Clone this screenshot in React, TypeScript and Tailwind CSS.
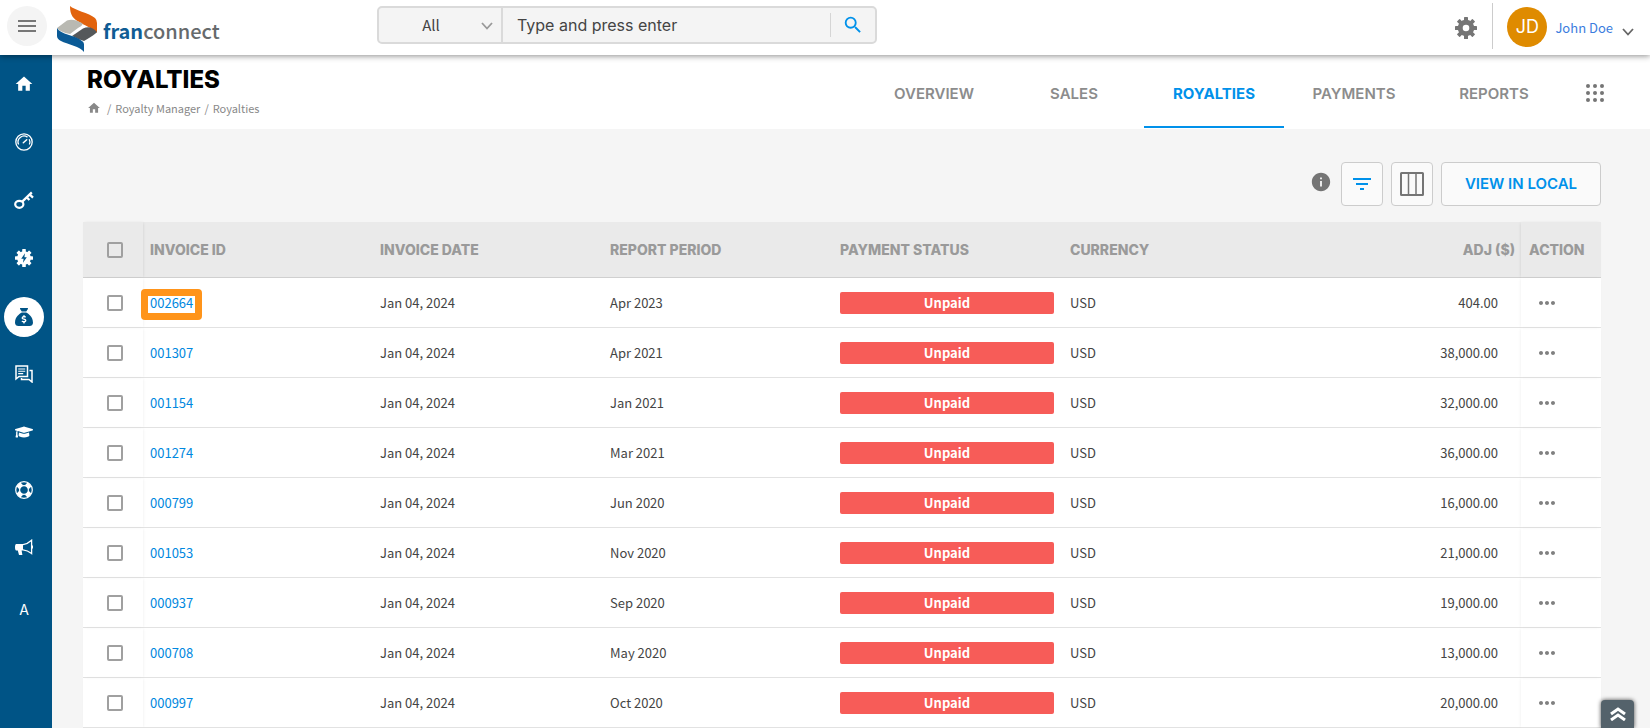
import { useState } from "react";
import type { ReactNode } from "react";
import { MdFilterList, MdHome, MdInfo, MdMenu, MdMoreHoriz, MdSearch } from "react-icons/md";
import { FaGraduationCap } from "react-icons/fa";
import { FaSackDollar } from "react-icons/fa6";

interface Invoice {
  id: string;
  date: string;
  period: string;
  status: string;
  currency: string;
  adj: string;
}

const invoices: Invoice[] = [
  { id: "002664", date: "Jan 04, 2024", period: "Apr 2023", status: "Unpaid", currency: "USD", adj: "404.00" },
  { id: "001307", date: "Jan 04, 2024", period: "Apr 2021", status: "Unpaid", currency: "USD", adj: "38,000.00" },
  { id: "001154", date: "Jan 04, 2024", period: "Jan 2021", status: "Unpaid", currency: "USD", adj: "32,000.00" },
  { id: "001274", date: "Jan 04, 2024", period: "Mar 2021", status: "Unpaid", currency: "USD", adj: "36,000.00" },
  { id: "000799", date: "Jan 04, 2024", period: "Jun 2020", status: "Unpaid", currency: "USD", adj: "16,000.00" },
  { id: "001053", date: "Jan 04, 2024", period: "Nov 2020", status: "Unpaid", currency: "USD", adj: "21,000.00" },
  { id: "000937", date: "Jan 04, 2024", period: "Sep 2020", status: "Unpaid", currency: "USD", adj: "19,000.00" },
  { id: "000708", date: "Jan 04, 2024", period: "May 2020", status: "Unpaid", currency: "USD", adj: "13,000.00" },
  { id: "000997", date: "Jan 04, 2024", period: "Oct 2020", status: "Unpaid", currency: "USD", adj: "20,000.00" },
];

const tabs = ["OVERVIEW", "SALES", "ROYALTIES", "PAYMENTS", "REPORTS"];

const teeth = [0, 45, 90, 135, 180, 225, 270, 315];

function GearIcon() {
  return (
    <svg viewBox="0 0 24 24" className="size-6" fill="currentColor">
      {teeth.map((a) => (
        <rect key={a} x="10" y="1" width="4" height="5" rx="0.6" transform={`rotate(${a} 12 12)`} />
      ))}
      <circle cx="12" cy="12" r="5.8" fill="none" stroke="currentColor" strokeWidth="5" />
    </svg>
  );
}

function GaugeIcon() {
  return (
    <svg viewBox="0 0 18 18" className="size-[18px]" fill="none" stroke="currentColor">
      <circle cx="9" cy="9" r="8.2" strokeWidth="1.3" />
      <path d="M3.6 11.5A6 6 0 0 1 12.5 4.1M14.2 6.2a6 6 0 0 1 .2 5.3" strokeWidth="1.3" />
      <path d="M8.3 9.8l3.4-3.1" strokeWidth="1.5" strokeLinecap="round" />
    </svg>
  );
}

function KeyIcon() {
  return (
    <svg viewBox="0 0 20 20" className="size-5" fill="none" stroke="currentColor">
      <ellipse cx="5.3" cy="14.3" rx="4.1" ry="3.5" strokeWidth="2.2" />
      <path d="M8 11.8L17.8 2.4M12.6 7.2l2.8 2.8M15.6 4.4l3.4 3.2" strokeWidth="2.3" />
    </svg>
  );
}

function GearBoltIcon() {
  return (
    <svg viewBox="0 0 20 20" className="size-5" fill="currentColor">
      {teeth.map((a) => (
        <rect key={a} x="8.2" y="1" width="3.6" height="5" rx="0.6" transform={`rotate(${a} 10 10)`} />
      ))}
      <circle cx="10" cy="10" r="6.8" />
      <path d="M11 5.2L7.2 10.8h2.4L9 14.8l3.8-5.6h-2.4z" fill="#005486" />
    </svg>
  );
}

function ChatIcon() {
  return (
    <svg viewBox="0 0 18 18" className="size-[18px]" fill="none" stroke="currentColor" strokeWidth="1.5">
      <path d="M1 1h11.5v10.5H4L1 14z" />
      <path d="M3.2 4h7M3.2 6.3h7M3.2 8.6h5" strokeWidth="1.1" />
      <path d="M14.5 5.5H17V17l-3-2.5H6.5v-1.6" />
    </svg>
  );
}

function LifeRingIcon() {
  return (
    <svg viewBox="0 0 18 18" className="size-[18px]" fill="none">
      <circle cx="9" cy="9" r="8.3" stroke="currentColor" strokeWidth="1.2" />
      <circle cx="9" cy="9" r="4.4" stroke="currentColor" strokeWidth="1.2" />
      <g stroke="currentColor" strokeWidth="5.4">
        {[45, 135, 225, 315].map((a) => (
          <path key={a} d="M9 .9v4.2" transform={`rotate(${a} 9 9)`} />
        ))}
      </g>
    </svg>
  );
}

function MegaphoneIcon() {
  return (
    <svg viewBox="0 0 18 18" className="size-[18px]">
      <path d="M1 5h7v6.4H6.6l.8 4.6H4l-1.2-4.6H1C.3 11 0 9.8 0 8.2S.3 5.4 1 5z" fill="currentColor" />
      <path d="M8 5.6c3.2-.4 6-2 8.6-4.4v13.4c-2.6-2.2-5.4-3.6-8.6-3.8" fill="none" stroke="currentColor" strokeWidth="1.3" />
      <path d="M17.4 6.5v3" stroke="currentColor" strokeWidth="1.2" />
    </svg>
  );
}

function ColumnsIcon() {
  return (
    <svg viewBox="0 0 24 24" className="size-6" fill="none" stroke="#757575">
      <rect x="1" y="1" width="22" height="22" rx="0.5" strokeWidth="2" />
      <path d="M8.5 1v22M16 1v22" strokeWidth="1.5" />
    </svg>
  );
}

function AppsIcon() {
  return (
    <svg viewBox="0 0 18 18" className="size-[18px]" fill="currentColor">
      {[2, 9, 16].map((y) => [2, 9, 16].map((x) => <circle key={`${x}-${y}`} cx={x} cy={y} r="2" />))}
    </svg>
  );
}

function LogoMark() {
  return (
    <svg viewBox="0 0 40 46" className="h-[46px] w-10">
      <path d="M13 0C17 4 32 7 38 12Q40 14 40 17V27C37 23 29 20 24 17C16 13 13 9 13 0Z" fill="#e2630d" />
      <path d="M0 22L10 14.500Q16 12 25 17Q27 19 21 22L13 28Q3 26 0 22Z" fill="#b9b9b2" />
      <path d="M40 26Q39 28 27 35Q20 33 15 30L26 22.500Q34 19 40 26Z" fill="#55585a" />
      <path d="M0 22Q2 26 12 29Q26 33 27 38V46C24 41 10 38 4 35Q0 33 0 30Z" fill="#0a5a96" />
    </svg>
  );
}

function Chevron() {
  return (
    <svg viewBox="0 0 12 8" className="h-2 w-3" fill="none" stroke="currentColor" strokeWidth="1.8">
      <path d="M1 1l5 5.500L11 1" />
    </svg>
  );
}

const sideItems: { label: string; icon: ReactNode; active?: boolean }[] = [
  { label: "Home", icon: <MdHome className="size-5" /> },
  { label: "Dashboard", icon: <GaugeIcon /> },
  { label: "Access", icon: <KeyIcon /> },
  { label: "Operations", icon: <GearBoltIcon /> },
  { label: "Finance", icon: <FaSackDollar className="size-[18px]" />, active: true },
  { label: "Messages", icon: <ChatIcon /> },
  { label: "Training", icon: <FaGraduationCap className="size-[18px]" /> },
  { label: "Support", icon: <LifeRingIcon /> },
  { label: "Marketing", icon: <MegaphoneIcon /> },
  { label: "Admin", icon: <span className="pt-2 font-['Inter',sans-serif] text-sm">A</span> },
];

function TopBar() {
  return (
    <header className="relative z-20 flex h-[55px] shrink-0 items-center bg-white pb-[3px] shadow-[0_1px_6px_rgba(0,0,0,0.45)]">
      <button aria-label="Menu" className="ml-[7px] flex size-10 shrink-0 items-center justify-center rounded-full bg-[#f4f4f4] text-[#777]">
        <MdMenu className="size-6" />
      </button>
      <a href="#" className="ml-2.5 flex w-[320px] shrink-0 items-center gap-1.5 pt-1.5">
        <LogoMark />
        <span className="pt-1 text-xl leading-none font-medium text-[#666a6c]">
          <span className="font-bold text-[#0f5c94]">fran</span>connect
        </span>
      </a>

      {/* search */}
      <form
        className="-mt-0.5 flex h-[38px] w-[500px] items-center rounded-[5px] border-2 border-[#dadada] bg-[#f4f4f4]"
        onSubmit={(e) => e.preventDefault()}
      >
        <div className="relative h-full w-[124px] shrink-0 border-r-2 border-[#dadada]">
          <select aria-label="Search in" className="h-full w-full appearance-none pr-[18px] text-center text-[15px] text-[#444] [text-align-last:center]">
            <option>All</option>
          </select>
          <span className="pointer-events-none absolute top-3.5 right-2 text-[#999]">
            <Chevron />
          </span>
        </div>
        <input
          type="text"
          aria-label="Search"
          placeholder="Type and press enter"
          className="h-full min-w-0 flex-1 px-3.5 font-['Inter',sans-serif] text-base outline-none placeholder:text-[#444]"
        />
        <button aria-label="Search" className="flex h-6 w-[45px] items-center justify-center border-l border-[#d5d5d5] text-[#0091ea]">
          <MdSearch className="size-[22px]" />
        </button>
      </form>

      <div className="ml-auto flex items-center">
        <button aria-label="Settings" className="mt-1 mr-3.5 text-[#757575]">
          <GearIcon />
        </button>
        <div className="mr-3.5 h-[46px] w-px bg-[#ccc]" />
        <button className="flex items-center pt-0.5">
          <span className="flex size-10 items-center justify-center rounded-full bg-[#df8b00] font-['Inter',sans-serif] text-lg text-white">
            JD
          </span>
          <span className="ml-2 pt-0.5 text-[13px] text-[#3b7dde]">John Doe</span>
          <span className="mt-2.5 mr-4 ml-[9px] text-[#666]">
            <Chevron />
          </span>
        </button>
      </div>
    </header>
  );
}

function SideBar() {
  return (
    <nav className="flex w-[52px] shrink-0 flex-col bg-[#005486] pt-px">
      {sideItems.map((item) => (
        <a key={item.label} href="#" aria-label={item.label} className="flex h-[58px] items-center pl-1">
          <span
            className={
              item.active
                ? "flex size-10 items-center justify-center rounded-full bg-white text-[#005486]"
                : "flex size-10 items-center justify-center pb-0.5 text-white"
            }
          >
            {item.icon}
          </span>
        </a>
      ))}
    </nav>
  );
}

function PageHeader({ tab, onTab }: { tab: string; onTab: (t: string) => void }) {
  return (
    <div className="flex h-[74px] shrink-0 justify-between bg-white pl-[35px]">
      <div className="pt-3">
        <h1 className="font-['Inter',sans-serif] text-2xl leading-[26px] font-extrabold text-black">ROYALTIES</h1>
        <div className="mt-[5px] flex items-center text-[11px] leading-5 text-[#888]">
          <a href="#" aria-label="Home">
            <MdHome className="size-3.5" />
          </a>
          <span className="mr-1 ml-1.5">/</span>
          <a href="#">Royalty Manager</a>
          <span className="mx-1">/</span>
          <span>Royalties</span>
        </div>
      </div>
      <div className="flex">
        {tabs.map((t) => (
          <button
            key={t}
            onClick={() => onTab(t)}
            className={
              t === tab
                ? "mb-px w-[140px] border-b-2 border-[#0091ea] pt-2 font-['Inter',sans-serif] text-[15px] font-bold text-[#0091ea]"
                : "mb-px w-[140px] border-b-2 border-transparent pt-2 font-['Inter',sans-serif] text-[15px] font-semibold text-[#8c8c8c]"
            }
          >
            {t}
          </button>
        ))}
        <button aria-label="Apps" className="mr-[46px] ml-[22px] pt-0.5 text-[#757575]">
          <AppsIcon />
        </button>
      </div>
    </div>
  );
}

function Check({ label }: { label: string }) {
  return (
    <input
      type="checkbox"
      aria-label={label}
      className="block size-4 appearance-none rounded-xs border-2 border-[#a0a0a0] checked:bg-[#0091ea]"
    />
  );
}

function InvoiceTable() {
  const th = "h-14 border-b border-[#d0d0d0] pl-[7px] text-left font-extrabold";
  const td = "h-[50px] border-b border-[#e2e2e2] pt-px pl-[7px]";

  return (
    <table className="w-full table-fixed border-separate border-spacing-0">
      <colgroup>
        <col className="w-[60px]" />
        <col className="w-[230px]" />
        <col className="w-[230px]" />
        <col className="w-[230px]" />
        <col className="w-[230px]" />
        <col />
        <col className="w-20" />
      </colgroup>
      <thead className="bg-[#eaeaea] font-['Inter',sans-serif] text-sm text-[#9a9a9a]">
        <tr>
          <th className="h-14 border-b border-[#d0d0d0] pl-6 shadow-[1px_0_3px_-1px_rgba(0,0,0,0.12)]">
            <Check label="Select all" />
          </th>
          <th className={th}>INVOICE ID</th>
          <th className={th}>INVOICE DATE</th>
          <th className={th}>REPORT PERIOD</th>
          <th className={th}>PAYMENT STATUS</th>
          <th className={th}>
            <div className="flex justify-between pr-1.5">
              <span>CURRENCY</span>
              <span>ADJ ($)</span>
            </div>
          </th>
          <th className="h-14 border-b border-[#d0d0d0] pl-2 text-left font-extrabold shadow-[-1px_0_3px_-1px_rgba(0,0,0,0.12)]">
            ACTION
          </th>
        </tr>
      </thead>
      <tbody className="bg-white text-[13px] text-[#444]">
        {invoices.map((inv, i) => (
          <tr key={inv.id}>
            <td className="h-[50px] border-b border-[#e2e2e2] pl-6 shadow-[1px_0_3px_-1px_rgba(0,0,0,0.08)]">
              <Check label={`Select invoice ${inv.id}`} />
            </td>
            <td className={td}>
              <a href="#" className="relative text-[#0088e0]">
                {inv.id}
                {i === 0 && (
                  <span className="pointer-events-none absolute -inset-x-[9px] -top-1 -bottom-2 rounded border-[7px] border-[#ff941a]" />
                )}
              </a>
            </td>
            <td className={td}>{inv.date}</td>
            <td className={td}>{inv.period}</td>
            <td className={td}>
              <div className="mr-[9px] rounded-xs bg-[#f75c58] text-center leading-[22px] font-bold text-white">
                {inv.status}
              </div>
            </td>
            <td className={td}>
              <div className="flex justify-between pr-[23px]">
                <span>{inv.currency}</span>
                <span>{inv.adj}</span>
              </div>
            </td>
            <td className="h-[50px] border-b border-[#e2e2e2] pl-3.5 shadow-[-1px_0_3px_-1px_rgba(0,0,0,0.08)]">
              <button aria-label="Actions" className="block text-[#808080]">
                <MdMoreHoriz className="size-6" />
              </button>
            </td>
          </tr>
        ))}
      </tbody>
    </table>
  );
}

export default function App() {
  const [tab, setTab] = useState("ROYALTIES");

  return (
    <div className="flex min-h-screen flex-col bg-[#f5f5f5] font-['Noto_Sans_CJK_SC',sans-serif]">
      <TopBar />
      <div className="flex flex-1">
        <SideBar />
        <main className="min-w-0 flex-1">
          <PageHeader tab={tab} onTab={setTab} />

          <div className="mr-[49px] ml-[31px] pt-[33px]">
            <div className="mb-4 flex items-center justify-end gap-2">
              <MdInfo className="mr-px mb-1 size-[22px] text-[#757575]" />
              <button
                aria-label="Filter"
                className="flex h-11 w-[42px] items-center justify-center rounded border border-[#ccc] bg-[#fafafa] text-[#0091ea]"
              >
                <MdFilterList className="size-6" />
              </button>
              <button
                aria-label="Columns"
                className="flex h-11 w-[42px] items-center justify-center rounded border border-[#ccc] bg-[#fafafa]"
              >
                <ColumnsIcon />
              </button>
              <button className="h-11 w-40 rounded border border-[#ccc] bg-[#fafafa] font-['Inter',sans-serif] text-[15px] font-semibold text-[#0091ea]">
                VIEW IN LOCAL
              </button>
            </div>
            <InvoiceTable />
          </div>
        </main>
      </div>

      {/* back to top */}
      <button
        aria-label="Back to top"
        className="fixed right-4 bottom-0 flex h-7 w-[33px] items-center justify-center rounded-t bg-[#54626b] text-white shadow-[0_0_4px_rgba(0,0,0,0.7)]"
      >
        <svg viewBox="0 0 16 14" className="h-3.5 w-4" fill="none" stroke="currentColor" strokeWidth="3">
          <path d="M1 7l7-5 7 5M1 13l7-5 7 5" />
        </svg>
      </button>
    </div>
  );
}
